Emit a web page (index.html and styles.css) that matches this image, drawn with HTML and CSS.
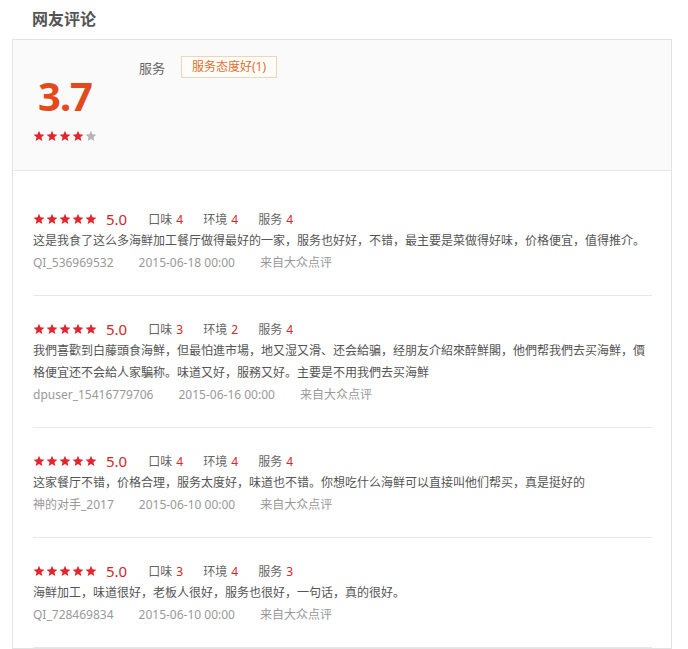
FILE: index.html
```html
<!DOCTYPE html>
<html lang="zh-CN">
<head>
    <meta charset="UTF-8">
    <meta name="viewport" content="width=device-width, initial-scale=1.0">
    <title>网友评论</title>
    <link rel="stylesheet" href="styles.css">
</head>
<body>
<svg width="0" height="0" class="defs">
    <symbol id="star" viewBox="0 0 24 24">
        <polygon points="12,1.5 15,8.7 22.8,9.3 16.9,14.4 18.7,22 12,18 5.3,22 7.1,14.4 1.2,9.3 9,8.7"/>
    </symbol>
</svg>

<h2 class="title">网友评论</h2>

<div class="comments">
    <div class="summary">
        <div class="score">
            <div class="score-num">3.7</div>
            <div class="stars">
                <svg class="on"><use href="#star"/></svg>
                <svg class="on"><use href="#star"/></svg>
                <svg class="on"><use href="#star"/></svg>
                <svg class="on"><use href="#star"/></svg>
                <svg class="off"><use href="#star"/></svg>
            </div>
        </div>
        <div class="tags">
            <span class="tag-label">服务</span>
            <span class="tag">服务态度好(1)</span>
        </div>
    </div>

    <div class="review-list">
        <div class="review">
            <div class="rate-row">
                <span class="stars">
                    <svg class="on"><use href="#star"/></svg><svg class="on"><use href="#star"/></svg><svg class="on"><use href="#star"/></svg><svg class="on"><use href="#star"/></svg><svg class="on"><use href="#star"/></svg>
                </span>
                <span class="rate">5.0</span>
                <span class="sub">口味 <b>4</b></span>
                <span class="sub">环境 <b>4</b></span>
                <span class="sub">服务 <b>4</b></span>
            </div>
            <p class="text">这是我食了这么多海鲜加工餐厅做得最好的一家，服务也好好，不错，最主要是菜做得好味，价格便宜，值得推介。</p>
            <div class="meta"><span>QI_536969532</span><span>2015-06-18 00:00</span><span>来自大众点评</span></div>
        </div>

        <div class="review">
            <div class="rate-row">
                <span class="stars">
                    <svg class="on"><use href="#star"/></svg><svg class="on"><use href="#star"/></svg><svg class="on"><use href="#star"/></svg><svg class="on"><use href="#star"/></svg><svg class="on"><use href="#star"/></svg>
                </span>
                <span class="rate">5.0</span>
                <span class="sub">口味 <b>3</b></span>
                <span class="sub">环境 <b>2</b></span>
                <span class="sub">服务 <b>4</b></span>
            </div>
            <p class="text">我們喜歡到白藤頭食海鮮，但最怕進市場，地又湿又滑、还会給骗，经朋友介紹來醉鮮閣，他們帮我們去买海鮮，價格便宜还不会給人家騙称。味道又好，服務又好。主要是不用我們去买海鮮</p>
            <div class="meta"><span>dpuser_15416779706</span><span>2015-06-16 00:00</span><span>来自大众点评</span></div>
        </div>

        <div class="review">
            <div class="rate-row">
                <span class="stars">
                    <svg class="on"><use href="#star"/></svg><svg class="on"><use href="#star"/></svg><svg class="on"><use href="#star"/></svg><svg class="on"><use href="#star"/></svg><svg class="on"><use href="#star"/></svg>
                </span>
                <span class="rate">5.0</span>
                <span class="sub">口味 <b>4</b></span>
                <span class="sub">环境 <b>4</b></span>
                <span class="sub">服务 <b>4</b></span>
            </div>
            <p class="text">这家餐厅不错，价格合理，服务太度好，味道也不错。你想吃什么海鲜可以直接叫他们帮买，真是挺好的</p>
            <div class="meta"><span>神的对手_2017</span><span>2015-06-10 00:00</span><span>来自大众点评</span></div>
        </div>

        <div class="review">
            <div class="rate-row">
                <span class="stars">
                    <svg class="on"><use href="#star"/></svg><svg class="on"><use href="#star"/></svg><svg class="on"><use href="#star"/></svg><svg class="on"><use href="#star"/></svg><svg class="on"><use href="#star"/></svg>
                </span>
                <span class="rate">5.0</span>
                <span class="sub">口味 <b>3</b></span>
                <span class="sub">环境 <b>4</b></span>
                <span class="sub">服务 <b>3</b></span>
            </div>
            <p class="text">海鲜加工，味道很好，老板人很好，服务也很好，一句话，真的很好。</p>
            <div class="meta"><span>QI_728469834</span><span>2015-06-10 00:00</span><span>来自大众点评</span></div>
        </div>
    </div>
</div>

</body>
</html>
```

FILE: styles.css
```css
body {
    font-family: "Noto Sans", "Noto Sans CJK SC", sans-serif;
    font-size: 12px;
    color: #555;
    background-color: #fff;
    margin: 0;
    padding: 8px 0 0 12px;
}

.defs {
    position: absolute;
}

.title {
    font-size: 16px;
    font-weight: bold;
    color: #555;
    margin: 0;
    padding-left: 20px;
    line-height: 22px;
    height: 31px;
}

.comments {
    width: 658px;
    border: 1px solid #e3e3e3;
}

/* summary block */
.summary {
    display: flex;
    height: 130px;
    background-color: #fafafa;
    border-bottom: 1px solid #e6e6e6;
    padding-left: 20px;
}

.score {
    width: 64px;
    text-align: center;
    padding-top: 32px;
}

.score-num {
    font-size: 40px;
    font-weight: bold;
    color: #e4491e;
    line-height: 48px;
    letter-spacing: -1px;
}

.score .stars {
    margin-top: 10px;
}

.tags {
    display: flex;
    align-items: center;
    height: 22px;
    margin-top: 16px;
    margin-left: 42px;
}

.tag-label {
    font-size: 13px;
    color: #666;
    margin-right: 16px;
}

.tag {
    border: 1px solid #f3d3b8;
    background-color: #fffdfa;
    color: #e46d2c;
    padding: 0 10px;
    line-height: 20px;
}

/* stars */
.stars {
    display: inline-flex;
    gap: 1px;
}

.stars svg {
    width: 12px;
    height: 12px;
}

.stars .on {
    fill: #e2252e;
}

.stars .off {
    fill: #b5b5b5;
}

/* review list */
.review-list {
    padding: 15px 19px 0 20px;
}

.review {
    padding: 22px 0 21px;
    border-bottom: 1px solid #e8e8e8;
}

.rate-row {
    display: flex;
    align-items: center;
    height: 22px;
}

.rate {
    font-size: 15px;
    color: #cc2a2a;
    margin: 0 21px 0 9px;
}

.sub {
    color: #666;
    margin-right: 20px;
}

.sub b {
    font-weight: normal;
    color: #d4282b;
    margin-left: 1px;
}

.text {
    margin: 0;
    line-height: 22px;
    color: #555;
}

.meta {
    display: flex;
    gap: 25px;
    line-height: 22px;
    color: #999;
}
```
